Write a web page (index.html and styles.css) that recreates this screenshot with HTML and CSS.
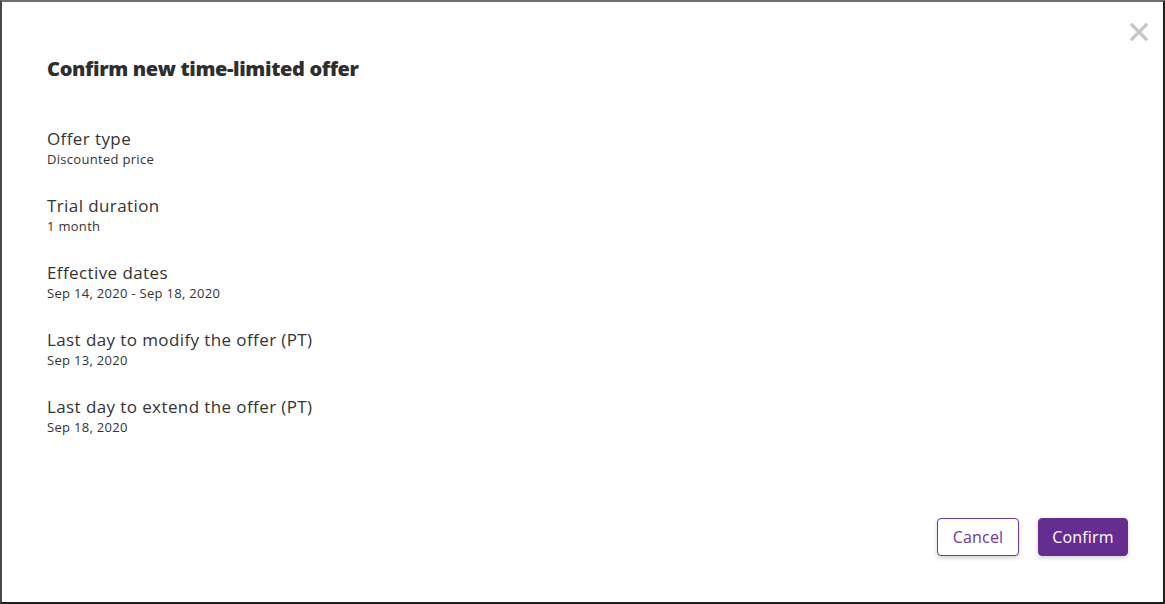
FILE: index.html
```html
<!DOCTYPE html>
<html>
<head>
<meta charset="utf-8">
<link rel="stylesheet" href="styles.css">
</head>
<body>
<div class="frame">
  <div class="modal">
    <button class="close" aria-label="Close">
      <svg width="18" height="18" viewBox="0 0 18 18"><path d="M2 2L16 16M16 2L2 16" stroke="#c6c6c6" stroke-width="3.2" stroke-linecap="square"/></svg>
    </button>
    <h1 class="title">Confirm new time-limited offer</h1>
    <dl class="details">
      <div class="item"><dt class="label">Offer type</dt><dd class="value">Discounted price</dd></div>
      <div class="item"><dt class="label">Trial duration</dt><dd class="value">1 month</dd></div>
      <div class="item"><dt class="label">Effective dates</dt><dd class="value">Sep 14, 2020 - Sep 18, 2020</dd></div>
      <div class="item"><dt class="label">Last day to modify the offer (PT)</dt><dd class="value">Sep 13, 2020</dd></div>
      <div class="item"><dt class="label">Last day to extend the offer (PT)</dt><dd class="value">Sep 18, 2020</dd></div>
    </dl>
    <div class="footer">
      <button class="btn btn-secondary">Cancel</button>
      <button class="btn btn-primary">Confirm</button>
    </div>
  </div>
</div>
</body>
</html>
```
FILE: styles.css
```css
html, body {
  margin: 0;
  padding: 0;
  background: #ffffff;
}
.frame {
  width: 1165px;
  height: 604px;
  box-sizing: border-box;
  border-top: 2px solid #6e6e6e;
  border-left: 2px solid #4a4a4a;
  border-right: 2px solid #1e1e1e;
  border-bottom: 2px solid #1e1e1e;
  background: #fff;
}
.modal {
  position: relative;
  height: 100%;
  box-sizing: border-box;
  padding: 53px 35px 46px 45px;
  display: flex;
  flex-direction: column;
  font-family: "Open Sans", "Liberation Sans", sans-serif;
  color: #333333;
}
.close {
  position: absolute;
  top: 21px;
  right: 15px;
  background: none;
  border: 0;
  padding: 0;
  width: 18px;
  height: 18px;
  cursor: pointer;
}
.title {
  margin: 0;
  font-size: 20px;
  line-height: 28px;
  font-weight: 800;
  letter-spacing: -0.35px;
  color: #2e2e2e;
}
.details {
  margin: 45px 0 0 0;
  display: flex;
  flex-direction: column;
  gap: 27px;
}
.item {
  display: flex;
  flex-direction: column;
}
.label {
  font-size: 17px;
  line-height: 22px;
  letter-spacing: 0.4px;
  color: #333;
}
.value {
  margin: 0;
  font-size: 13px;
  line-height: 18px;
  letter-spacing: 0.3px;
  color: #333;
}
.footer {
  margin-top: auto;
  display: flex;
  justify-content: flex-end;
  gap: 19px;
}
.btn {
  height: 38px;
  box-sizing: border-box;
  border-radius: 4px;
  font-family: "Open Sans", "Liberation Sans", sans-serif;
  font-size: 16px;
  letter-spacing: 0.2px;
  padding: 0;
  cursor: pointer;
  box-shadow: 0 2px 4px rgba(0,0,0,0.18);
}
.btn-secondary {
  width: 82px;
  background: #fff;
  border: 1px solid #6c3a9c;
  color: #6c3a9c;
}
.btn-primary {
  width: 90px;
  background: #662d91;
  border: 1px solid #662d91;
  color: #fff;
}
```
